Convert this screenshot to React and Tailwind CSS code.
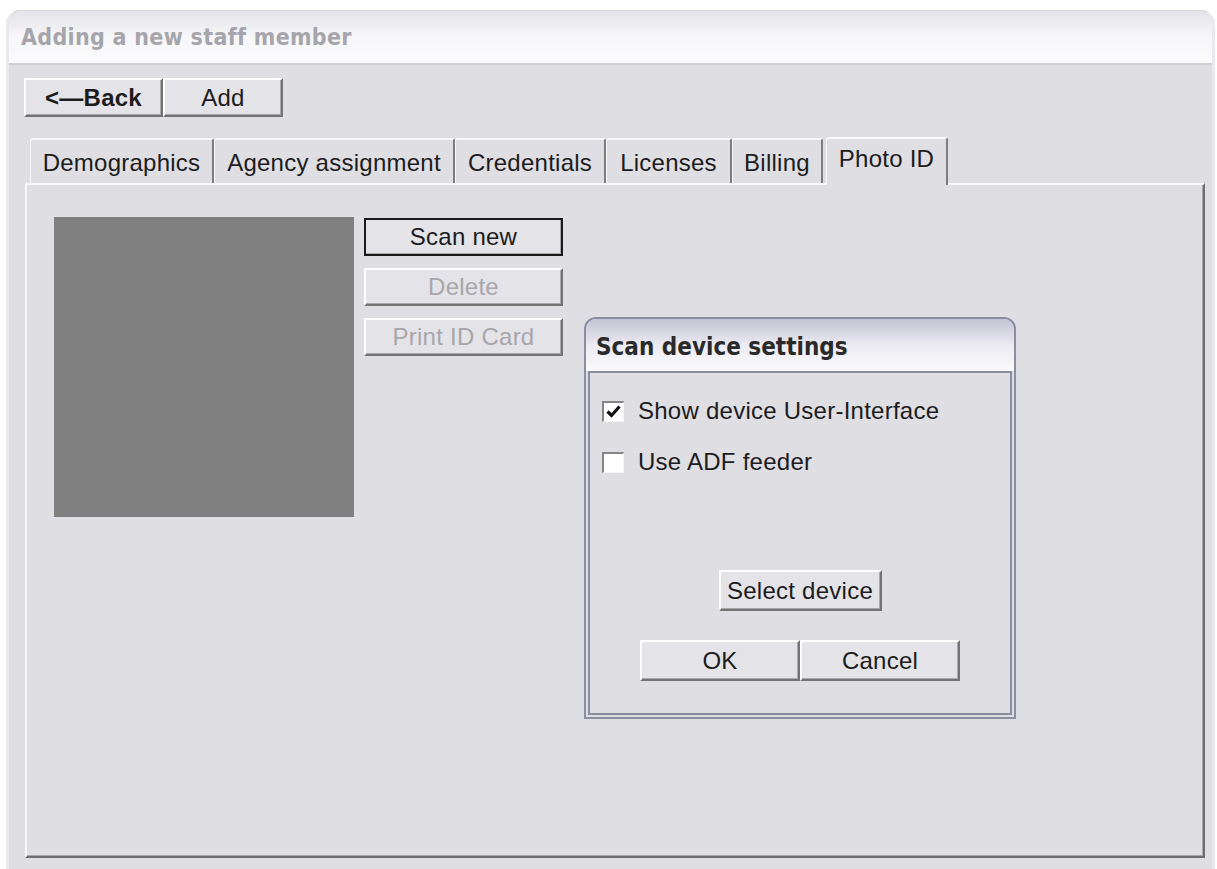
import React, { useState } from 'react';

const sans = { fontFamily: '"Liberation Sans", Arial, sans-serif', letterSpacing: '0.25px' };
const heading = { fontFamily: '"DejaVu Sans Condensed", "DejaVu Sans", sans-serif', fontStretch: 'condensed' };

// tab captions and their fixed widths
const tabs = [
  ['Demographics', 'w-[184px]'],
  ['Agency assignment', 'w-[241px]'],
  ['Credentials', 'w-[151px]'],
  ['Licenses', 'w-[126px]'],
  ['Billing', 'w-[91px]'],
  ['Photo ID', 'w-[122px]'],
];

// raised Windows-classic style button
const Button = ({ children, className = '', disabled = false, focused = false, bold = false }) => (
  <button
    disabled={disabled}
    className={`flex items-center justify-center bg-[#e4e3e8] text-[24px] leading-none border-t-2 border-l-2 border-t-white border-l-white border-b-2 border-r-2 border-b-[#737373] border-r-[#737373] shadow-[inset_-1px_-1px_0_#a9a9ad] ${
      disabled ? 'text-[#a7a7ab]' : 'text-[#1c1c1c]'
    } ${focused ? 'outline-2 outline-[#1a1a1a] -outline-offset-2' : ''} ${bold ? 'font-bold' : ''} ${className}`}
    style={sans}
  >
    {children}
  </button>
);

const Checkbox = ({ checked, label, onToggle }) => (
  <label className="flex items-center gap-[14px] cursor-pointer" style={sans} onClick={onToggle}>
    <span className="w-[22px] h-[21px] bg-white border-t-2 border-l-2 border-t-[#858589] border-l-[#858589] border-b border-r border-b-[#f4f4f4] border-r-[#f4f4f4] flex items-center justify-center">
      {checked && (
        <svg width="15" height="13" viewBox="0 0 15 13">
          <path d="M1.5 6.5 L5.5 10.5 L13.5 1.5" fill="none" stroke="#111" strokeWidth="3.2" />
        </svg>
      )}
    </span>
    <span className="text-[24px] leading-none text-[#1c1c1c]">{label}</span>
  </label>
);

const App = () => {
  const [active, setActive] = useState('Photo ID');
  const [showUi, setShowUi] = useState(true);
  const [useAdf, setUseAdf] = useState(false);

  return (
    <div className="w-[1217px] h-[869px] bg-white overflow-hidden pt-[10px] pl-[6px]">
      {/* main window */}
      <div className="w-[1209px] h-[870px] flex flex-col bg-[#dfdee3] rounded-t-[14px] border-l-[3px] border-r-[3px] border-t border-[#e9e9ee] border-t-[#d6d6dc]">
        <div className="h-[54px] shrink-0 flex items-center pl-[12px] rounded-t-[13px] bg-gradient-to-b from-[#e3e3e9] via-[#f7f7f9] to-[#fbfbfc] border-b-2 border-[#cfcfd6]">
          <span className="text-[23px] font-bold text-[#a5a5ab] tracking-[0.3px]" style={heading}>
            Adding a new staff member
          </span>
        </div>

        <div className="flex flex-col pl-[16px] pr-[7px]">
          {/* toolbar */}
          <div className="flex mt-[13px] -ml-[1px]">
            <Button bold className="w-[139px] h-[39px]">&lt;&#8212;Back</Button>
            <Button className="w-[120px] h-[39px]">Add</Button>
          </div>

          {/* tab strip */}
          <div className="flex items-end mt-[20px] pl-[5px] h-[46px]">
            {tabs.map(([t, w]) => {
              const sel = t === active;
              return (
                <div
                  key={t}
                  onClick={() => setActive(t)}
                  className={`${w} cursor-pointer flex items-center justify-center text-[24px] leading-none text-[#1c1c1c] border-t-2 border-l border-t-[#f8f8f8] border-l-[#f8f8f8] border-r-2 border-r-[#7d7d80] rounded-t-[3px] ${
                    sel ? 'h-[48px] pb-[6px] bg-[#dfdee3] relative z-10 -mb-[2px] ml-[3px]' : 'h-[45px] pt-[2px]'
                  }`}
                  style={sans}
                >
                  {t}
                </div>
              );
            })}
          </div>

          {/* tab panel */}
          <div className="h-[675px] border-t-2 border-l-2 border-t-[#f8f8f8] border-l-[#f8f8f8] border-b-2 border-r-2 border-b-[#6f6f72] border-r-[#6f6f72] shadow-[inset_-1px_-1px_0_#a7a7ab] flex items-start pl-[27px] pt-[32px]">
            <div className="w-[300px] h-[300px] bg-[#808080] shrink-0" />

            <div className="flex flex-col gap-[12px] ml-[10px] mt-[1px]">
              <Button focused className="w-[199px] h-[38px]">Scan new</Button>
              <Button disabled className="w-[199px] h-[38px]">Delete</Button>
              <Button disabled className="w-[199px] h-[38px]">Print ID Card</Button>
            </div>

            {/* scan settings window */}
            <div className="ml-[21px] mt-[100px] w-[432px] h-[402px] flex flex-col border-2 border-[#8c8ca2] rounded-t-[12px] bg-[#dfdee3] overflow-hidden">
              <div className="h-[52px] shrink-0 flex items-center pl-[10px] pt-[4px] bg-gradient-to-b from-[#c3c3d4] via-[#ecebf2] to-[#fafafc]">
                <span className="text-[24px] font-bold text-[#2a2a2a]" style={heading}>
                  Scan device settings
                </span>
              </div>
              <div className="flex-1 flex px-[2px] pb-[2px]">
                <div className="flex-1 flex flex-col border-2 border-[#8a8aa0] pl-[12px] pt-[26px]">
                  <div className="flex flex-col gap-[27px]">
                    <Checkbox checked={showUi} label="Show device User-Interface" onToggle={() => setShowUi(!showUi)} />
                    <Checkbox checked={useAdf} label="Use ADF feeder" onToggle={() => setUseAdf(!useAdf)} />
                  </div>
                  <div className="flex flex-col items-center mt-[96px] pr-[12px]">
                    <Button className="w-[163px] h-[41px]">Select device</Button>
                    <div className="flex mt-[29px]">
                      <Button className="w-[160px] h-[41px]">OK</Button>
                      <Button className="w-[160px] h-[41px]">Cancel</Button>
                    </div>
                  </div>
                </div>
              </div>
            </div>
          </div>
        </div>
      </div>
    </div>
  );
};

export default App;
